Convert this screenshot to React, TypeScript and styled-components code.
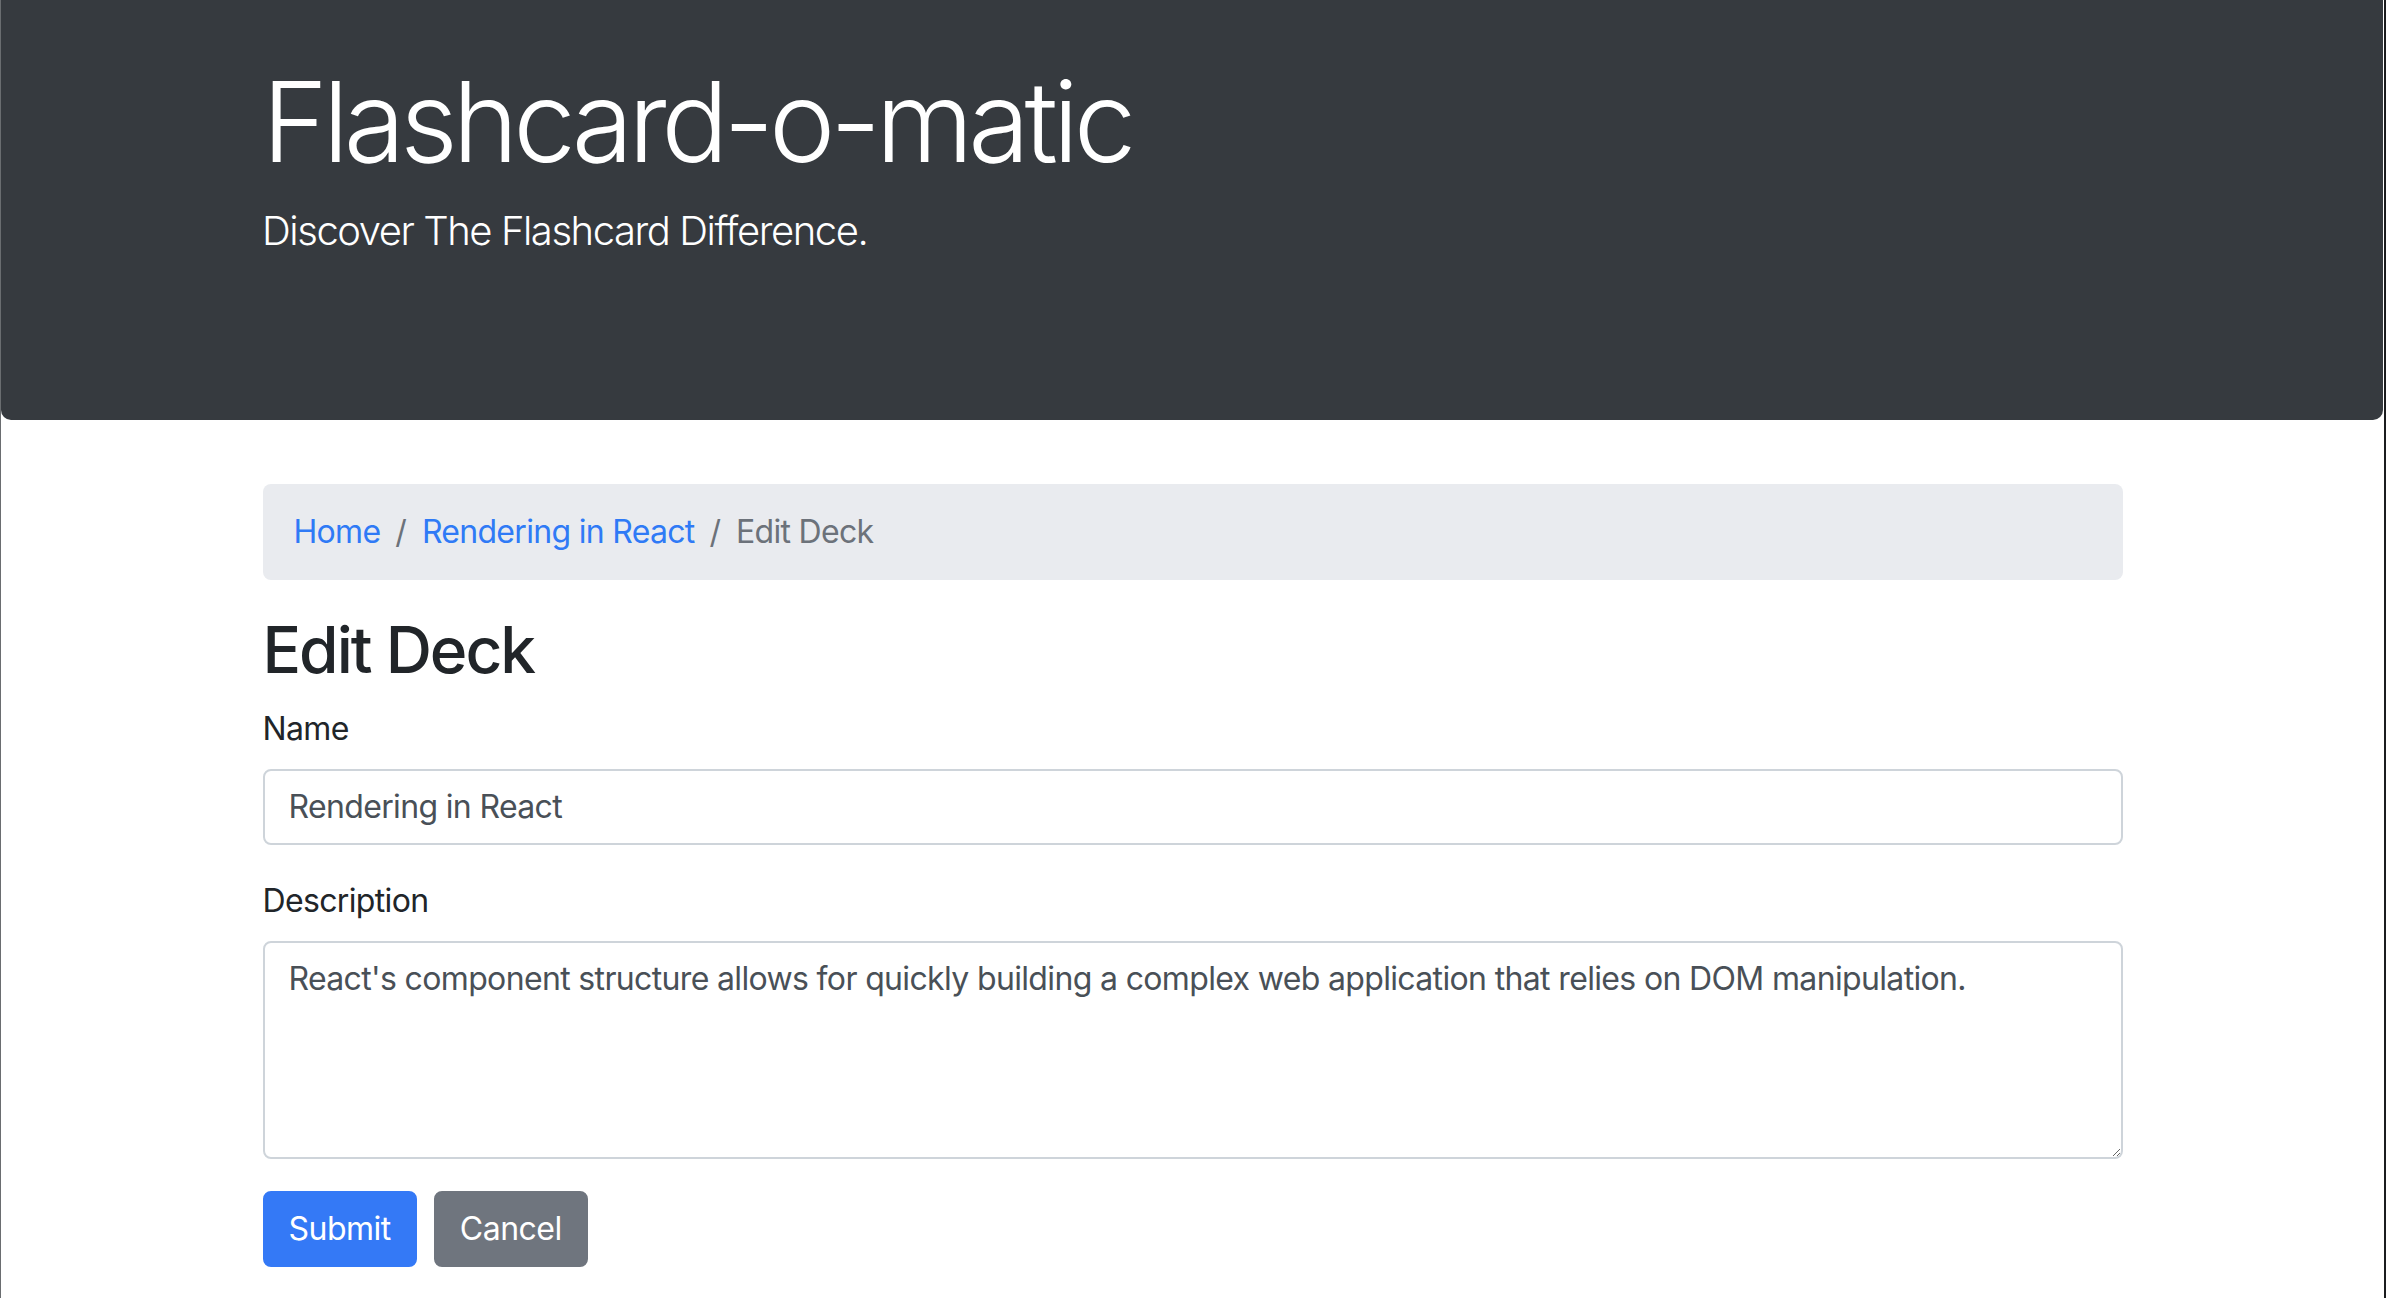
import React, {useState} from 'react'
import styled, {createGlobalStyle} from 'styled-components'

const GlobalStyle = createGlobalStyle`
  html, body {
    margin: 0;
    padding: 0;
    background: #ffffff;
  }
  body {
    font-family: Inter, "Liberation Sans", sans-serif;
    color: #212529;
  }
  * {
    box-sizing: border-box;
  }
`

const Page = styled.div`
  min-height: 100vh;
  border-left: 1px solid #6a6d70;
  border-right: 2px solid #1b1c1e;
`

const Jumbotron = styled.header`
  height: 420px;
  margin-right: 1px;
  padding-top: 54px;
  background: #363a3f;
  color: #ffffff;
  border-radius: 0 0 10px 10px;
`

const Container = styled.div`
  width: 1860px;
  margin: 0 auto;
`

const Title = styled.h1`
  margin: 0 0 13px;
  font-size: 112px;
  font-weight: 300;
  line-height: 1.2;
  letter-spacing: -5.2px;
`

const Lead = styled.p`
  margin: 0;
  font-size: 40px;
  font-weight: 300;
  line-height: 1.5;
  letter-spacing: -1.45px;
`

const Main = styled(Container)`
  padding-top: 64px;
`

const Breadcrumb = styled.nav`
  display: flex;
  align-items: center;
  height: 96px;
  padding: 0 31px;
  margin-bottom: 32px;
  background: #e9ebef;
  border-radius: 8px;
  font-size: 32px;
  line-height: 48px;
`

const Crumb = styled.a<{active?: boolean}>`
  color: ${p => (p.active ? '#6c727a' : '#2f7af6')};
  text-decoration: none;
  letter-spacing: -0.7px;
`

const Separator = styled.span`
  padding: 0 15px;
  color: #6c727a;
`

const Heading = styled.h2`
  margin: 0 0 16px;
  font-size: 64px;
  font-weight: 500;
  line-height: 1.2;
  letter-spacing: -2px;
  color: #212529;
`

const FormGroup = styled.div`
  margin-bottom: 32px;
`

const Label = styled.label`
  display: block;
  margin-bottom: 16px;
  font-size: 32px;
  line-height: 48px;
  letter-spacing: -0.65px;
  color: #212529;
`

const fieldStyle = `
  display: block;
  width: 100%;
  padding: 12px 24px;
  font-family: Inter, "Liberation Sans", sans-serif;
  font-size: 32px;
  line-height: 48px;
  letter-spacing: -0.65px;
  color: #495057;
  background: #ffffff;
  border: 2px solid #ced4da;
  border-radius: 8px;
  outline: none;
`

const Input = styled.input`
  ${fieldStyle}
  height: 76px;
`

const TextArea = styled.textarea`
  ${fieldStyle}
  height: 218px;
  resize: vertical;
`

const ButtonRow = styled.div`
  display: flex;
  gap: 17px;
`

const Button = styled.button<{variant: 'primary' | 'secondary'}>`
  height: 76px;
  padding: 0 24px;
  font-family: Inter, "Liberation Sans", sans-serif;
  font-size: 32px;
  line-height: 48px;
  letter-spacing: -0.5px;
  color: #ffffff;
  background: ${p => (p.variant === 'primary' ? '#3479f6' : '#6f757e')};
  border: 2px solid ${p => (p.variant === 'primary' ? '#3479f6' : '#6f757e')};
  border-radius: 8px;
  cursor: pointer;
`

export default function App() {
    const [name, setName] = useState('Rendering in React')
    const [description, setDescription] = useState(
        "React's component structure allows for quickly building a complex web application that relies on DOM manipulation."
    )

    return (
        <Page>
            <GlobalStyle/>
            <Jumbotron>
                <Container>
                    <Title>Flashcard-o-matic</Title>
                    <Lead>Discover The Flashcard Difference.</Lead>
                </Container>
            </Jumbotron>
            <Main>
                <Breadcrumb>
                    <Crumb href="#">Home</Crumb>
                    <Separator>/</Separator>
                    <Crumb href="#">Rendering in React</Crumb>
                    <Separator>/</Separator>
                    <Crumb active>Edit Deck</Crumb>
                </Breadcrumb>
                <Heading>Edit Deck</Heading>
                <form onSubmit={e => e.preventDefault()}>
                    <FormGroup>
                        <Label htmlFor="name">Name</Label>
                        <Input id="name" value={name} onChange={e => setName(e.target.value)}/>
                    </FormGroup>
                    <FormGroup>
                        <Label htmlFor="description">Description</Label>
                        <TextArea id="description" value={description}
                                  onChange={e => setDescription(e.target.value)}/>
                    </FormGroup>
                    <ButtonRow>
                        <Button type="submit" variant="primary">Submit</Button>
                        <Button type="button" variant="secondary">Cancel</Button>
                    </ButtonRow>
                </form>
            </Main>
        </Page>
    )
}
